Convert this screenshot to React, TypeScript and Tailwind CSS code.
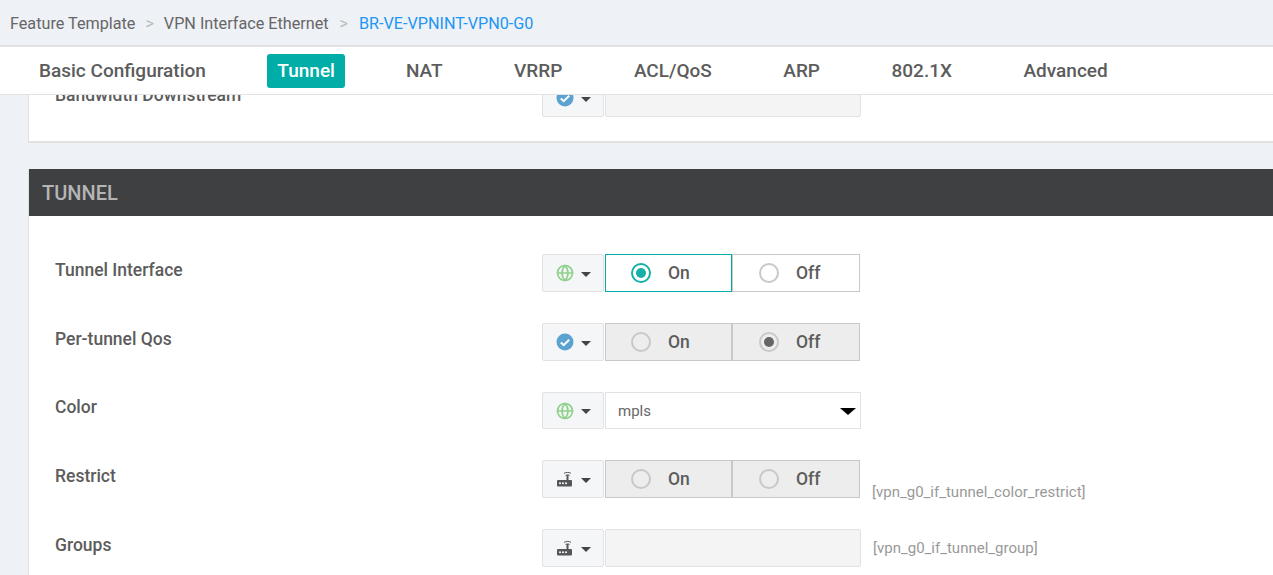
import React from 'react';
import { Globe } from 'lucide-react';

type Scope = 'global' | 'default' | 'device';

function ScopeIcon({ scope }: { scope: Scope }) {
  if (scope === 'global') {
    return <Globe className="w-[18px] h-[18px] text-[#8fd18a]" strokeWidth={2.2} />;
  }
  if (scope === 'default') {
    return (
      <svg viewBox="0 0 18 18" className="w-[18px] h-[18px]">
        <circle cx="9" cy="9" r="8.5" fill="#5aa2d0" />
        <path d="M4.8 9.4l2.9 2.7 5.5-5.4" fill="none" stroke="#fff" strokeWidth="2" />
      </svg>
    );
  }
  return (
    <svg viewBox="0 0 18 18" className="w-[18px] h-[18px]">
      <rect x="1" y="10" width="15" height="6.5" rx="1" fill="#55565a" />
      <rect x="10.5" y="5" width="2" height="5" fill="#55565a" />
      <path d="M8 3.4c2-1.3 5.4-1.3 7 0M9.6 5.4c1-.6 3-.6 4 0" fill="none" stroke="#55565a" strokeWidth="1" />
      <circle cx="4" cy="13.2" r="1" fill="#fff" />
      <circle cx="7" cy="13.2" r="1" fill="#fff" />
      <circle cx="10" cy="13.2" r="1" fill="#fff" />
    </svg>
  );
}

function ScopeButton({ scope }: { scope: Scope }) {
  return (
    <div className="w-[62px] h-full shrink-0 flex items-center pl-[13px] gap-[6px] bg-[#f5f6f8] border border-[#e2e2e2] rounded-[2px]">
      <ScopeIcon scope={scope} />
      <span className="w-0 h-0 mt-[2px] ml-[1px] border-x-[5px] border-x-transparent border-t-[5px] border-t-[#444]" />
    </div>
  );
}

function RadioCell({ label, checked, active, disabled, wide }: { label: string; checked?: boolean; active?: boolean; disabled?: boolean; wide?: boolean }) {
  const cellColor = active
    ? 'border-[#00ada7] bg-white'
    : disabled
      ? 'border-[#c8c8c8] bg-[#ededed]'
      : 'border-[#c8c8c8] bg-white';
  const ringColor = active ? 'border-[#17b0a8]' : 'border-[#c8c8c8]';
  const dotColor = active ? 'bg-[#17b0a8]' : 'bg-[#666]';
  return (
    <div className={`${wide ? 'w-[128px] pl-[26px]' : 'w-[127px] pl-[25px]'} h-full flex items-center gap-[17px] border ${cellColor}`}>
      <span className={`w-[20px] h-[20px] rounded-full border-2 flex items-center justify-center ${ringColor}`}>
        {checked && <span className={`w-[10px] h-[10px] rounded-full ${dotColor}`} />}
      </span>
      <span className="text-[17.5px] font-medium text-[#5c5c5c]">{label}</span>
    </div>
  );
}

function FormRow({ label, scope, hint, short, children }: { label: string; scope: Scope; hint?: React.ReactNode; short?: boolean; children: React.ReactNode }) {
  return (
    <div className={short ? 'flex h-[37px]' : 'flex h-[38px]'}>
      <div className={`w-[487px] shrink-0 ${short ? 'pt-[3px]' : 'pt-[4px]'} text-[17.5px] leading-[24px] font-medium text-[#5c5c5c]`}>{label}</div>
      <ScopeButton scope={scope} />
      <div className="ml-[1px] h-full flex">{children}</div>
      {hint}
    </div>
  );
}

export default function App() {
  const tabs = ['Basic Configuration', 'Tunnel', 'NAT', 'VRRP', 'ACL/QoS', 'ARP', '802.1X', 'Advanced'];

  return (
    <div className="w-[1273px] h-[575px] overflow-hidden bg-[#eef1f6] font-['Roboto',sans-serif]">
      <div className="h-[47px] flex items-center pl-[10px] pt-[4px] text-[16.2px] text-[#666] border-b-2 border-[#dfe0e2]">
        <span>Feature Template</span>
        <span className="mx-[10px] text-[#bbb]">&gt;</span>
        <span>VPN Interface Ethernet</span>
        <span className="ml-[11px] mr-[11px] text-[#bbb]">&gt;</span>
        <span className="text-[#2196f3]">BR-VE-VPNINT-VPN0-G0</span>
      </div>

      <div className="relative z-10 h-[48px] flex items-center bg-white border-b border-[#e2e2e2] pl-[28px] gap-[49.5px]">
        {tabs.map((tab) => (
          <div
            key={tab}
            className={
              tab === 'Tunnel'
                ? 'h-[34px] ml-[0.5px] flex items-center pt-[1px] px-[10.5px] rounded-[3px] bg-[#00ada7] text-white text-[19px] font-medium'
                : 'h-[34px] flex items-center pt-[1px] px-[11px] text-[#5c5c5c] text-[19px] font-medium'
            }
          >
            {tab}
          </div>
        ))}
      </div>

      <div className="pl-[28px]">
        <div className="h-[48px] bg-white border-b-2 border-l border-[#e2e2e2]">
          <div className="h-[22px] overflow-hidden flex pl-[26px]">
            <div className="w-[487px] shrink-0 -mt-[12px] text-[17.5px] leading-[24px] font-medium text-[#5c5c5c]">Bandwidth Downstream</div>
            <div className="-mt-[16px] flex h-[38px]">
              <ScopeButton scope="default" />
              <div className="ml-[1px] w-[256px] h-full bg-[#f4f4f4] border border-[#e2e2e2] rounded-[2px]" />
            </div>
          </div>
        </div>

        <div className="mt-[26px] h-[420px] bg-white border-l border-[#e2e2e2]">
          <div className="h-[47px] flex items-center pl-[13px] bg-[#3f4042] text-[20px] font-medium text-[#b5b5b5]">TUNNEL</div>
          <div className="pt-[38px] pl-[26px] flex flex-col">
            <FormRow label="Tunnel Interface" scope="global">
              <RadioCell label="On" checked active />
              <RadioCell label="Off" wide />
            </FormRow>
            <div className="h-[31px]" />
            <FormRow label="Per-tunnel Qos" scope="default">
              <RadioCell label="On" disabled />
              <RadioCell label="Off" checked disabled wide />
            </FormRow>
            <div className="h-[31px]" />
            <FormRow label="Color" scope="global" short>
              <div className="w-[256px] h-full flex items-center justify-between pl-[12px] pt-[1px] pr-[4px] border border-[#e2e2e2] text-[15px] text-[#666]">
                mpls
                <span className="w-0 h-0 border-x-[8px] border-x-transparent border-t-[7px] border-t-black" />
              </div>
            </FormRow>
            <div className="h-[31px]" />
            <FormRow
              label="Restrict"
              scope="device"
              hint={<span className="ml-[12px] self-end text-[15px] leading-[20px] -mb-[4px] text-[#999]">[vpn_g0_if_tunnel_color_restrict]</span>}
            >
              <RadioCell label="On" disabled />
              <RadioCell label="Off" disabled wide />
            </FormRow>
            <div className="h-[31px]" />
            <FormRow
              label="Groups"
              scope="device"
              hint={<span className="ml-[12px] self-center text-[15px] leading-[20px] text-[#999]">[vpn_g0_if_tunnel_group]</span>}
            >
              <div className="w-[256px] h-full bg-[#f4f4f4] border border-[#e2e2e2] rounded-[2px]" />
            </FormRow>
          </div>
        </div>
      </div>
    </div>
  );
}
